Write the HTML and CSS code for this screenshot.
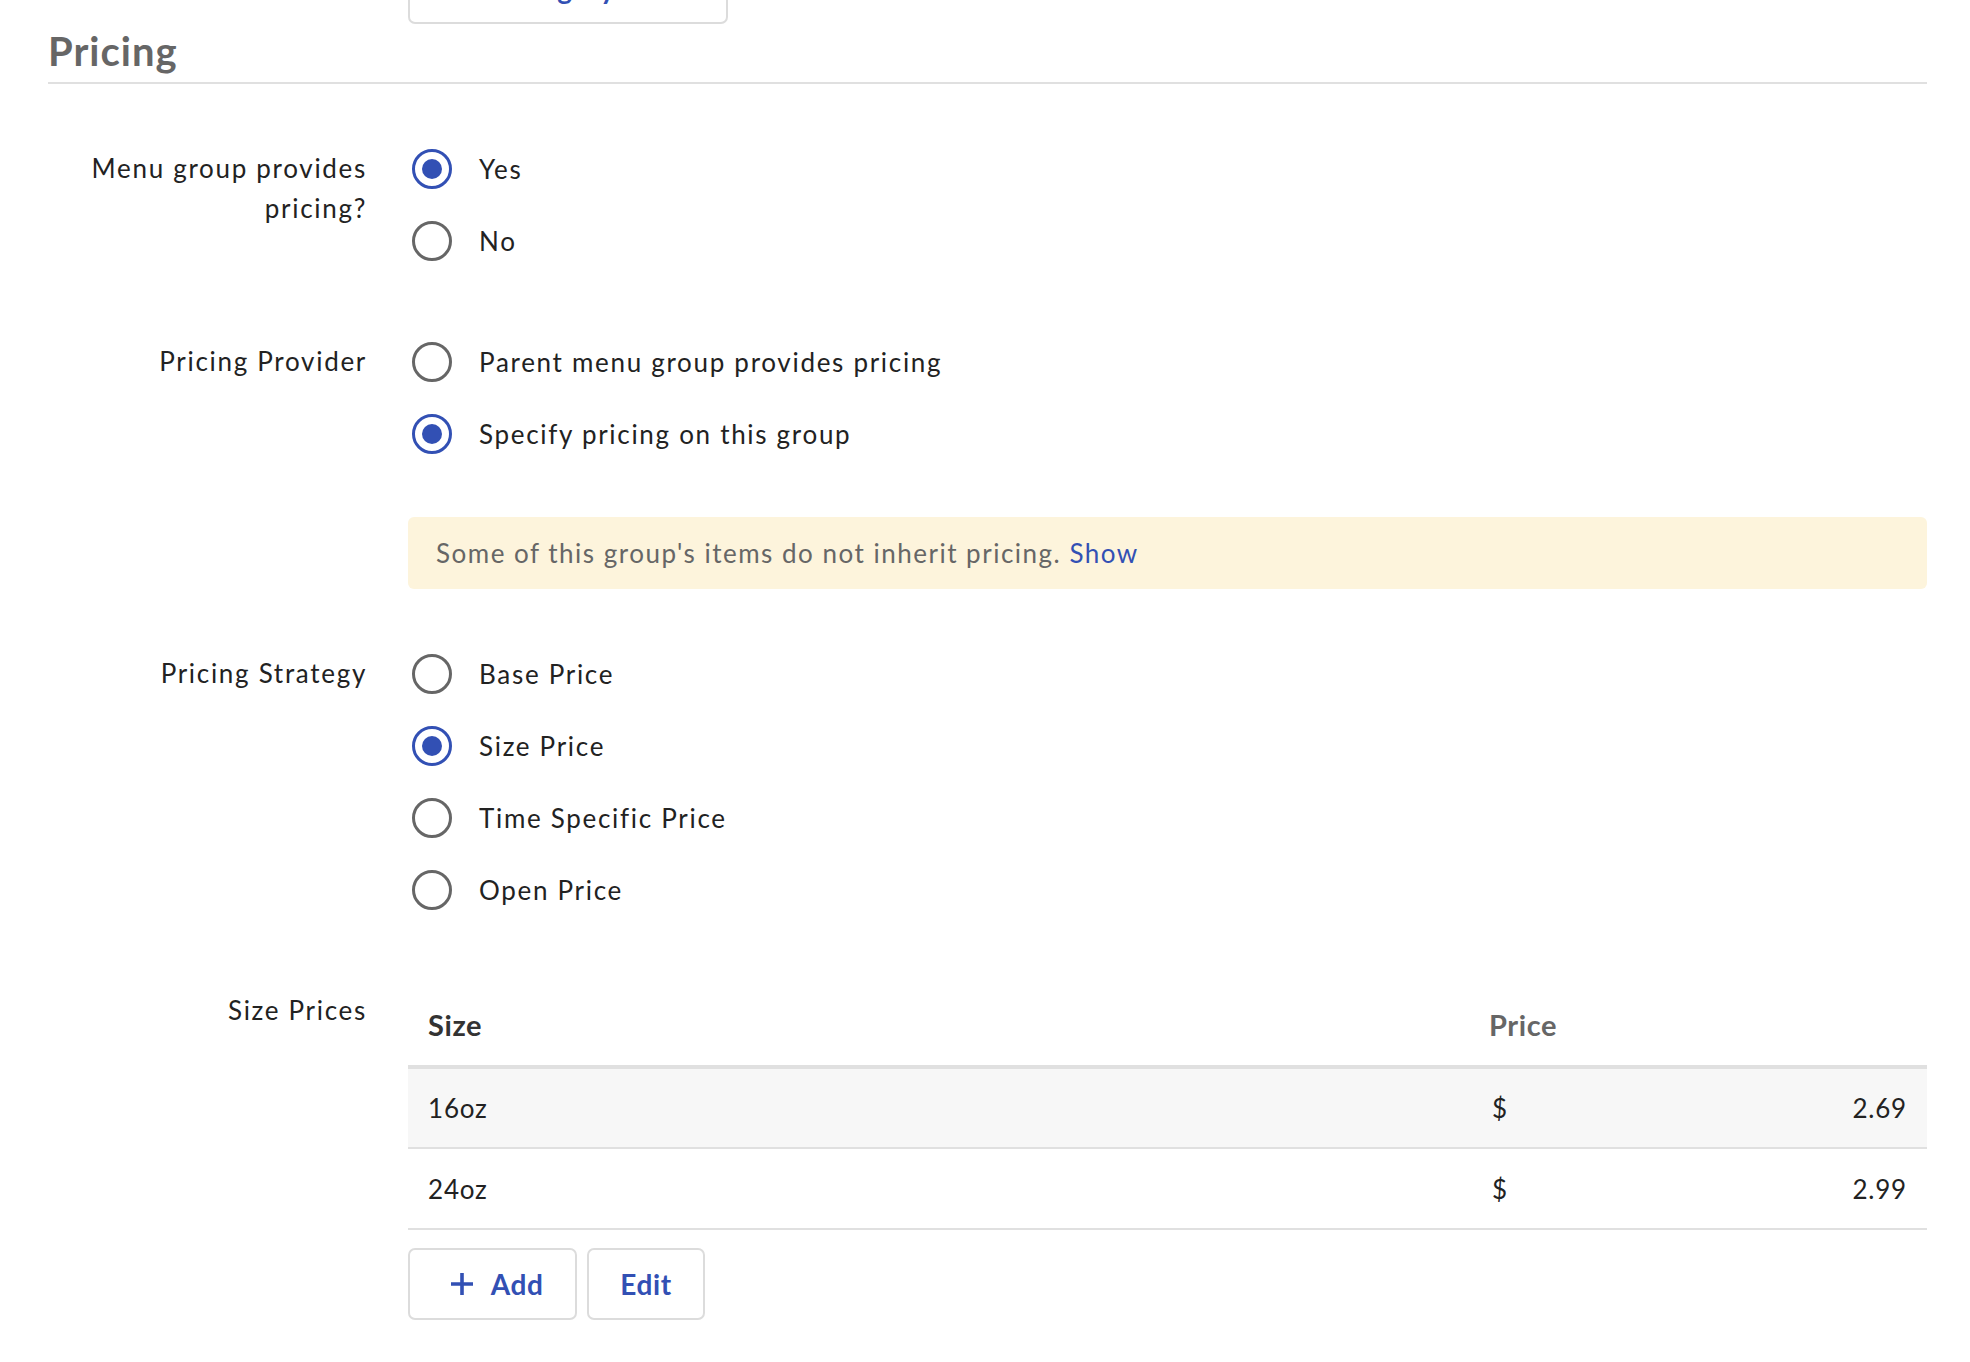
FILE: index.html
```html
<!DOCTYPE html>
<html lang="en">
<head>
<meta charset="utf-8">
<title>Pricing</title>
<link rel="stylesheet" href="styles.css">
</head>
<body>
<div class="page">
  <div class="top-actions">
    <button class="btn top-btn">Edit category order</button>
  </div>

  <h2 class="section-title">Pricing</h2>

  <div class="form-row">
    <div class="label">Menu group provides<br>pricing?</div>
    <div class="field">
      <div class="options">
        <div class="option"><span class="radio checked"></span><span class="opt-text">Yes</span></div>
        <div class="option"><span class="radio"></span><span class="opt-text">No</span></div>
      </div>
    </div>
  </div>

  <div class="form-row tight">
    <div class="label">Pricing Provider</div>
    <div class="field">
      <div class="options">
        <div class="option"><span class="radio"></span><span class="opt-text">Parent menu group provides pricing</span></div>
        <div class="option"><span class="radio checked"></span><span class="opt-text">Specify pricing on this group</span></div>
      </div>
      <div class="notice">Some of this group's items do not inherit pricing. <a class="link" href="#">Show</a></div>
    </div>
  </div>

  <div class="form-row">
    <div class="label">Pricing Strategy</div>
    <div class="field">
      <div class="options">
        <div class="option"><span class="radio"></span><span class="opt-text">Base Price</span></div>
        <div class="option"><span class="radio checked"></span><span class="opt-text">Size Price</span></div>
        <div class="option"><span class="radio"></span><span class="opt-text">Time Specific Price</span></div>
        <div class="option"><span class="radio"></span><span class="opt-text">Open Price</span></div>
      </div>
    </div>
  </div>

  <div class="form-row">
    <div class="label">Size Prices</div>
    <div class="field">
      <table class="price-table">
        <thead>
          <tr>
            <th class="col-size sorted">Size</th>
            <th class="col-price">Price</th>
          </tr>
        </thead>
        <tbody>
          <tr class="alt">
            <td class="col-size">16oz</td>
            <td class="col-price"><div class="price"><span>$</span><span>2.69</span></div></td>
          </tr>
          <tr>
            <td class="col-size">24oz</td>
            <td class="col-price"><div class="price"><span>$</span><span>2.99</span></div></td>
          </tr>
        </tbody>
      </table>
      <div class="table-actions">
        <button class="btn action add">
          <svg class="plus" width="24" height="24" viewBox="0 0 24 24" aria-hidden="true"><path d="M12 1v22M1 12h22" stroke="currentColor" stroke-width="3.6" fill="none"/></svg>
          <span>Add</span>
        </button>
        <button class="btn action edit">Edit</button>
      </div>
    </div>
  </div>
</div>
</body>
</html>
```

FILE: styles.css
```css
* { box-sizing: border-box; }

html, body {
  margin: 0;
  padding: 0;
  background: #fff;
}

body {
  font-family: Lato, "Liberation Sans", Arial, sans-serif;
  font-size: 26px;
  letter-spacing: 1.7px;
  color: #222;
}

.page {
  padding: 0 43px 0 48px;
}

.btn {
  font-family: Lato, "Liberation Sans", Arial, sans-serif;
  font-weight: 700;
  font-size: 28px;
  letter-spacing: 0.6px;
  color: #3250b4;
  background: #fff;
  border: 2px solid #dcdcdc;
  border-radius: 7px;
  height: 72px;
  padding: 0 33px;
  display: inline-flex;
  align-items: center;
  justify-content: center;
  cursor: pointer;
}

.top-actions {
  padding-left: 360px;
  margin-top: -48px;
  height: 72px;
}

.top-btn {
  width: 320px;
}

.section-title {
  margin: 5px 0 0;
  font-size: 40px;
  line-height: 45px;
  font-weight: 700;
  letter-spacing: 1px;
  color: #666;
  padding-bottom: 8px;
  border-bottom: 2px solid #e0e0e0;
}

.form-row {
  display: flex;
  gap: 41px;
  margin-top: 64px;
}

.form-row + .form-row {
  margin-top: 80px;
}

.form-row.tight + .form-row {
  margin-top: 64px;
}

.label {
  width: 319px;
  flex: none;
  text-align: right;
  line-height: 40px;
  color: #222;
}

.field {
  flex: 1;
  min-width: 0;
}

.options {
  display: flex;
  flex-direction: column;
  gap: 32px;
  padding-top: 1px;
}

.option {
  display: flex;
  align-items: center;
  height: 40px;
  gap: 27px;
}

.radio {
  width: 40px;
  height: 40px;
  margin-left: 4px;
  border-radius: 50%;
  border: 3px solid #666;
  flex: none;
  display: flex;
  align-items: center;
  justify-content: center;
}

.radio.checked {
  border-color: #3250b4;
}

.radio.checked::after {
  content: "";
  width: 20px;
  height: 20px;
  border-radius: 50%;
  background: #3250b4;
}

.opt-text {
  line-height: 40px;
}

.notice {
  margin-top: 63px;
  height: 72px;
  background: #fdf4dc;
  border-radius: 6px;
  padding: 0 28px;
  display: flex;
  align-items: center;
  color: #666;
  letter-spacing: 1.5px;
  white-space: pre;
}

.link {
  color: #3250b4;
  text-decoration: none;
}

.price-table {
  width: 100%;
  border-collapse: collapse;
  font-size: 26px;
}

.price-table th {
  height: 77px;
  text-align: left;
  font-size: 29px;
  font-weight: 700;
  color: #666;
  padding: 0 20px 6px;
  border-bottom: 4px solid #e0e0e0;
  vertical-align: middle;
  letter-spacing: 0.6px;
}

.price-table th.sorted {
  color: #333;
}

.price-table td {
  height: 81px;
  padding: 0 20px;
  border-bottom: 2px solid #e0e0e0;
  color: #222;
  vertical-align: middle;
  letter-spacing: 0.8px;
}

.price-table tr.alt td {
  background: #f7f7f7;
}

.col-price {
  width: 458px;
}

.price {
  display: flex;
  justify-content: space-between;
  padding-left: 3px;
}

.table-actions {
  display: flex;
  gap: 10px;
  margin-top: 18px;
}

.action.add {
  width: 169px;
  gap: 17px;
  padding: 0 32px 0 40px;
}

.action.edit {
  width: 118px;
}

.plus {
  flex: none;
}
```
